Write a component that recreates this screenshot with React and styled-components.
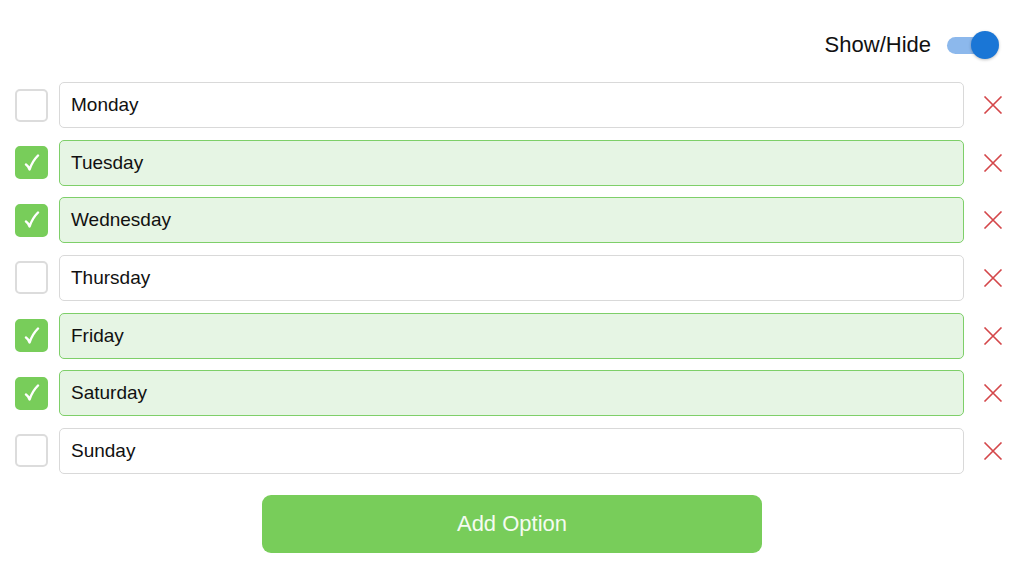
import React, { useState } from "react";
import styled, { createGlobalStyle } from "styled-components";

const Global = createGlobalStyle`
  html, body { margin: 0; padding: 0; background: #fff; }
  body { font-family: "Liberation Sans", Arial, sans-serif; color: #111; }
`;

const Page = styled.div`
  width: 1024px;
  height: 568px;
  box-sizing: border-box;
  padding: 31px 21px 0 15px;
  display: flex;
  flex-direction: column;
`;

const Header = styled.div`
  display: flex;
  justify-content: flex-end;
  align-items: center;
  height: 28px;
  gap: 16px;
  margin-right: 4px;
`;

const Label = styled.span`
  font-size: 22px;
  color: #111;
`;

const Toggle = styled.div`
  position: relative;
  width: 52px;
  height: 28px;
  display: flex;
  align-items: center;
`;

const Track = styled.div`
  width: 48px;
  height: 17px;
  border-radius: 9px;
  background: ${(p) => (p.$on ? "#8cb8ec" : "#ccc")};
`;

const Thumb = styled.div`
  position: absolute;
  top: 0;
  left: ${(p) => (p.$on ? "24px" : "0")};
  width: 28px;
  height: 28px;
  border-radius: 50%;
  background: ${(p) => (p.$on ? "#1a76d6" : "#fafafa")};
  box-shadow: 0 1px 3px rgba(0, 0, 0, 0.25);
`;

const List = styled.div`
  margin-top: 23px;
  display: flex;
  flex-direction: column;
  gap: 11.67px;
`;

const Row = styled.div`
  display: flex;
  align-items: center;
  height: 46px;
`;

const Check = styled.div`
  width: 33px;
  height: 33px;
  box-sizing: border-box;
  border-radius: 5px;
  border: 2px solid ${(p) => (p.$checked ? "#78cd5a" : "#dcdcdc")};
  background: ${(p) => (p.$checked ? "#78cd5a" : "#fff")};
  display: flex;
  align-items: center;
  justify-content: center;
  margin-right: 11px;
  flex-shrink: 0;
`;

const Field = styled.div`
  flex: 1;
  height: 46px;
  box-sizing: border-box;
  border-radius: 5px;
  border: 1.5px solid ${(p) => (p.$checked ? "#7ecf69" : "#d9d9d9")};
  background: ${(p) => (p.$checked ? "#e6f5e4" : "#fff")};
  display: flex;
  align-items: center;
  padding-left: 11px;
  font-size: 19px;
  color: #111;
`;

const Remove = styled.button`
  margin-left: 19px;
  width: 20px;
  height: 20px;
  padding: 0;
  border: none;
  background: none;
  display: flex;
  align-items: center;
  justify-content: center;
  flex-shrink: 0;
`;

const Footer = styled.div`
  margin: 21px -21px 0 -15px;
  display: flex;
  justify-content: center;
`;

const AddButton = styled.button`
  width: 500px;
  height: 58px;
  border: none;
  border-radius: 9px;
  background: #78cd5a;
  color: #f4fbf1;
  font-family: "Liberation Sans", Arial, sans-serif;
  font-size: 22px;
`;

const days = [
  ["Monday", false],
  ["Tuesday", true],
  ["Wednesday", true],
  ["Thursday", false],
  ["Friday", true],
  ["Saturday", true],
  ["Sunday", false],
];

const XIcon = () => (
  <svg width="20" height="18" viewBox="0 0 20 18">
    <path d="M1.5 0.5 L18.5 17.5 M18.5 0.5 L1.5 17.5" stroke="#d4474a" strokeWidth="1.6" fill="none" />
  </svg>
);

const Tick = () => (
  <svg width="16" height="18" viewBox="0 0 16 18">
    <path
      d="M2 10.5 C3.5 11.5 4.6 13 5.6 15.5 C7.5 9.5 10.5 5 14 1.5"
      stroke="#fff"
      strokeWidth="2.4"
      strokeLinecap="round"
      strokeLinejoin="round"
      fill="none"
    />
  </svg>
);

export default function App() {
  const [on] = useState(true);
  return (
    <>
      <Global />
      <Page>
        <Header>
          <Label>Show/Hide</Label>
          <Toggle>
            <Track $on={on} />
            <Thumb $on={on} />
          </Toggle>
        </Header>
        <List>
          {days.map(([d, c]) => (
            <Row key={d}>
              <Check $checked={c}>{c && <Tick />}</Check>
              <Field $checked={c}>{d}</Field>
              <Remove aria-label="remove">
                <XIcon />
              </Remove>
            </Row>
          ))}
        </List>
        <Footer>
          <AddButton>Add Option</AddButton>
        </Footer>
      </Page>
    </>
  );
}
